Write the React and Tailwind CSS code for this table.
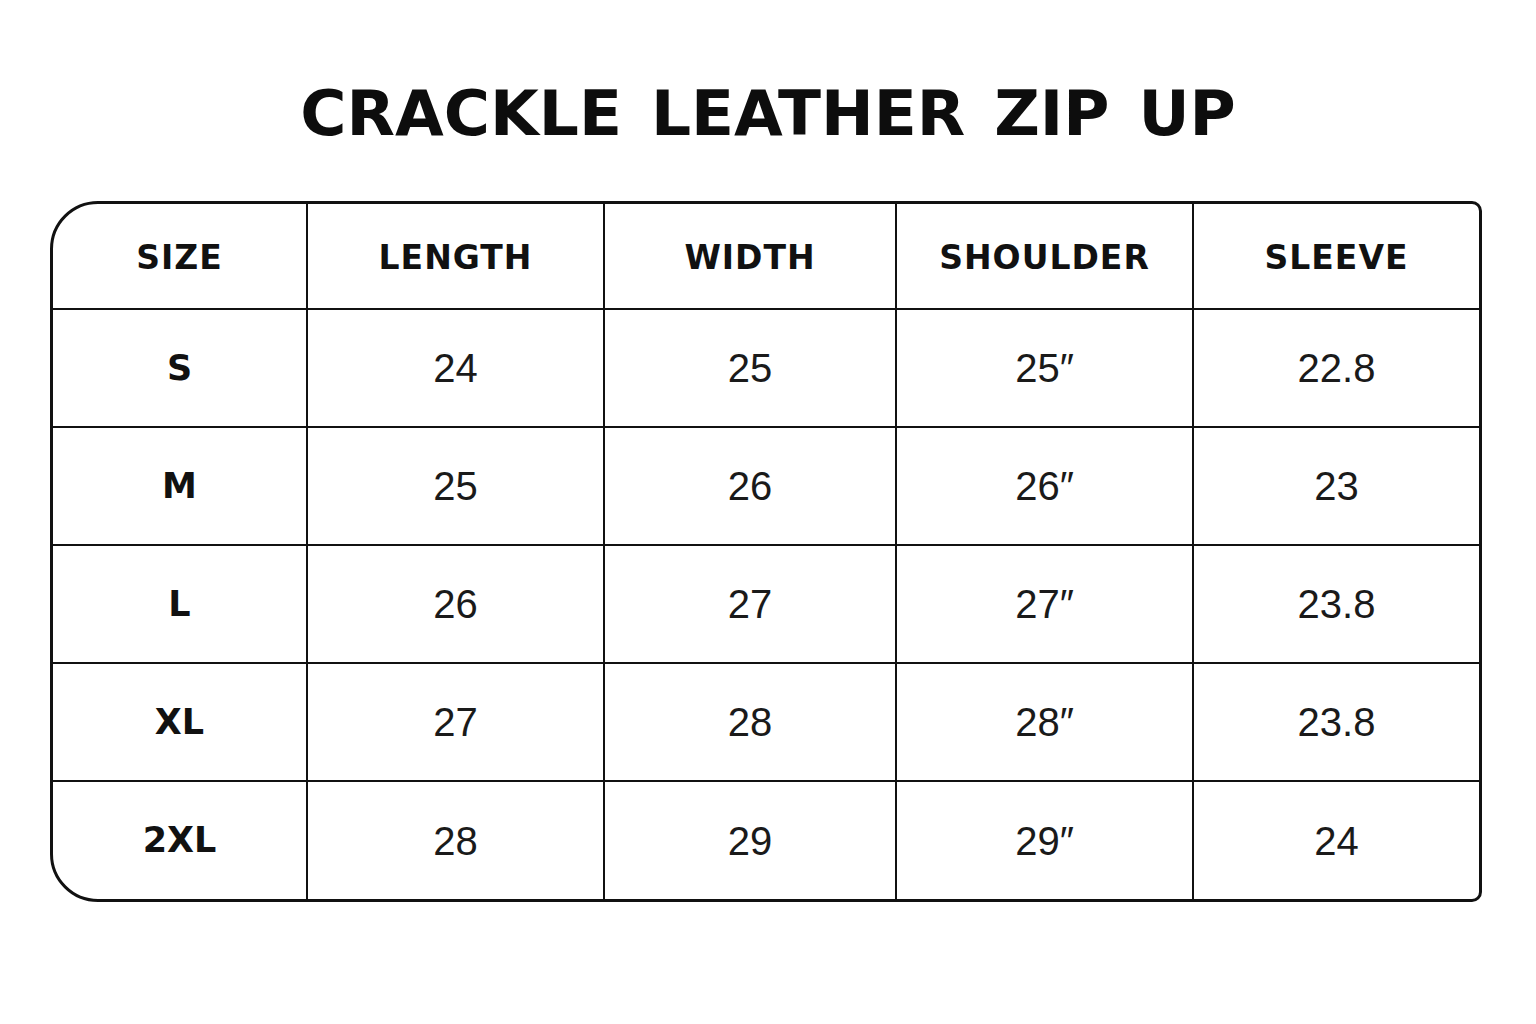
import React from 'react';

const HEADERS = ['SIZE', 'LENGTH', 'WIDTH', 'SHOULDER', 'SLEEVE'];

const ROWS = [
  ['S', '24', '25', '25″', '22.8'],
  ['M', '25', '26', '26″', '23'],
  ['L', '26', '27', '27″', '23.8'],
  ['XL', '27', '28', '28″', '23.8'],
  ['2XL', '28', '29', '29″', '24'],
];

const heavy = { fontFamily: '"DejaVu Sans", "Liberation Sans", sans-serif' };
const plain = { fontFamily: '"Liberation Sans", "DejaVu Sans", Arial, sans-serif' };

export default function App() {
  return (
    <div className="w-[1536px] h-[1024px] bg-white text-[#111]">
      <h1
        style={heavy}
        className="pt-[82px] text-center text-[63px] font-bold leading-none tracking-[0px] [word-spacing:7px] text-[#0d0d0d]"
      >
        CRACKLE LEATHER ZIP UP
      </h1>

      <div className="mt-[56px] pl-[50px]">
        <div className="w-[1432px] border-[3px] border-[#111] rounded-tl-[48px] rounded-bl-[48px] rounded-tr-[10px] rounded-br-[10px] overflow-hidden grid grid-cols-[255px_297px_292px_297px_285px] grid-rows-[106px_118px_118px_118px_118px_117px]">
          {HEADERS.map((h, i) => (
            <div
              key={h}
              style={heavy}
              className={`flex items-center justify-center pt-[3px] border-b-2 border-[#111] text-[33px] font-bold tracking-[1px] ${
                i < 4 ? 'border-r-2' : ''
              }`}
            >
              {h}
            </div>
          ))}
          {ROWS.map((row, r) =>
            row.map((cell, c) => (
              <div
                key={`${r}-${c}`}
                style={c === 0 ? heavy : plain}
                className={`flex items-center justify-center border-[#111] ${
                  c < 4 ? 'border-r-2' : ''
                } ${r < ROWS.length - 1 ? 'border-b-2' : ''} ${
                  c === 0 ? 'text-[35px] font-bold' : 'text-[40px] text-[#1a1a1a]'
                }`}
              >
                {cell}
              </div>
            ))
          )}
        </div>
      </div>
    </div>
  );
}
